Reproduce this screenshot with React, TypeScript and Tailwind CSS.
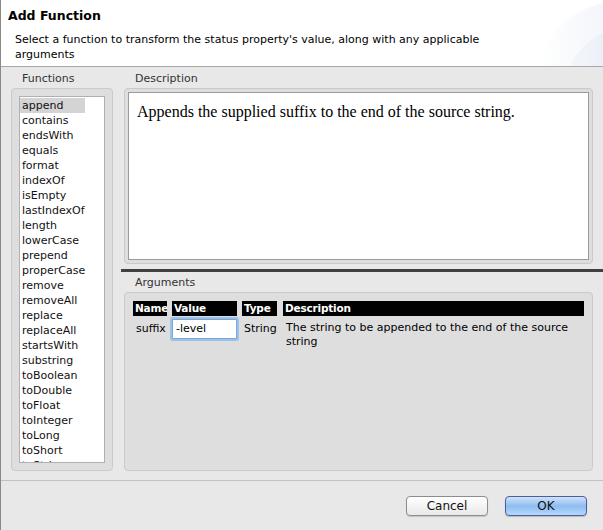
const FUNCTIONS = [
  "append",
  "contains",
  "endsWith",
  "equals",
  "format",
  "indexOf",
  "isEmpty",
  "lastIndexOf",
  "length",
  "lowerCase",
  "prepend",
  "properCase",
  "remove",
  "removeAll",
  "replace",
  "replaceAll",
  "startsWith",
  "substring",
  "toBoolean",
  "toDouble",
  "toFloat",
  "toInteger",
  "toLong",
  "toShort",
  "toString",
];

const HeaderArt = () => (
  <svg
    className="absolute right-0 top-0"
    width="70"
    height="66"
    viewBox="0 0 70 66"
  >
    <defs>
      <linearGradient id="g1" x1="0" y1="0" x2="1" y2="0">
        <stop offset="0" stopColor="#ffffff" />
        <stop offset="1" stopColor="#dfe6f3" />
      </linearGradient>
      <linearGradient id="g2" x1="0" y1="0" x2="1" y2="0">
        <stop offset="0" stopColor="#f4f7fc" />
        <stop offset="1" stopColor="#d3ddef" />
      </linearGradient>
    </defs>
    <ellipse cx="95" cy="75" rx="90" ry="75" fill="url(#g1)" />
    <ellipse cx="105" cy="95" rx="75" ry="70" fill="url(#g2)" />
  </svg>
);

const GroupLabel = ({ children }: { children: string }) => (
  <div className="pl-[11px] h-[18px] text-[11px] leading-[18px] text-[#333] shrink-0">
    {children}
  </div>
);

const ColHead = ({ children }: { children: string }) => (
  <div className="bg-black text-white font-bold pl-[2px] text-[10.5px] tracking-[-0.2px] whitespace-nowrap overflow-hidden">
    {children}
  </div>
);

export default function App() {
  return (
    <div
      className="w-[603px] h-[530px] bg-[#e8e8e8] flex flex-col overflow-hidden border-l border-[#8a8a8a] text-black"
      style={{ fontFamily: '"DejaVu Sans", "Lucida Grande", sans-serif' }}
    >
      <div className="relative h-[67px] bg-white border-b border-[#a8a8a8] shrink-0 overflow-hidden">
        <HeaderArt />
        <div className="relative pl-[7px] pt-[8px] text-[12.5px] font-bold leading-[16px]">
          Add Function
        </div>
        <div className="relative ml-[14px] mt-[8px] w-[480px] text-[11px] leading-[15px]">
          Select a function to transform the status property's value, along
          with any applicable arguments
        </div>
      </div>

      <div className="flex flex-1 min-h-0 pt-[3px] pb-[9px]">
        <div className="w-[112px] pl-[10px] flex flex-col shrink-0 min-h-0">
          <GroupLabel>Functions</GroupLabel>
          <div className="flex-1 min-h-0 rounded-[4px] border border-[#cacaca] bg-[#dedede] p-[7px]">
            <div className="h-full bg-white border border-[#b0b0b0] overflow-hidden pt-[1px]">
              {FUNCTIONS.map((f, i) => (
                <div
                  key={f}
                  className={`pl-[2px] h-[15px] text-[11px] leading-[15px] text-[#111] ${
                    i === 0 ? "bg-[#d4d4d4] w-[65px]" : ""
                  }`}
                >
                  {f}
                </div>
              ))}
            </div>
          </div>
        </div>

        <div className="flex-1 flex flex-col pl-[8px] min-h-0">
          <div className="flex flex-col h-[194px] pl-[3px] pr-[10px] shrink-0">
            <GroupLabel>Description</GroupLabel>
            <div className="flex-1 rounded-[4px] border border-[#cacaca] bg-[#dedede] p-[3px]">
              <div
                className="h-full bg-white border border-[#9a9a9a] pl-[8px] pt-[9px] text-[16px] leading-[20px]"
                style={{ fontFamily: '"Liberation Serif", "Times New Roman", serif' }}
              >
                Appends the supplied suffix to the end of the source string.
              </div>
            </div>
          </div>

          <div className="mt-[5px] h-[3px] bg-[#404040] shrink-0" />

          <div className="flex-1 min-h-0 flex flex-col pl-[3px] pr-[10px] pt-[2px]">
            <GroupLabel>Arguments</GroupLabel>
            <div className="flex-1 rounded-[4px] border border-[#cacaca] bg-[#dedede] pl-[8px] pr-[8px] pt-[8px]">
              <div className="flex text-[11px] leading-[15px]">
                <div className="w-[39px] shrink-0 pr-[5px]">
                  <ColHead>Name</ColHead>
                  <div className="pl-[3px] pt-[5px]">suffix</div>
                </div>
                <div className="w-[70px] shrink-0 pr-[5px]">
                  <ColHead>Value</ColHead>
                  <div className="pt-[3px]">
                    <div className="h-[20px] bg-white border border-[#7aa7d8] shadow-[0_0_0_2px_#9cc2ea] rounded-[1px] pl-[3px] leading-[18px] text-[11px]">
                      -level
                    </div>
                  </div>
                </div>
                <div className="w-[41px] shrink-0 pr-[6px]">
                  <ColHead>Type</ColHead>
                  <div className="pl-[2px] pt-[5px]">String</div>
                </div>
                <div className="flex-1">
                  <ColHead>Description</ColHead>
                  <div className="pl-[3px] pt-[5px] leading-[14px]">
                    The string to be appended to the end of the source string
                  </div>
                </div>
              </div>
            </div>
          </div>
        </div>
      </div>

      <div className="h-[50px] border-t border-[#c2c2c2] shrink-0 flex items-start justify-end gap-[17px] pt-[15px] pr-[16px]">
        <button className="w-[82px] h-[20px] rounded-[4px] border border-[#8d8d8d] bg-gradient-to-b from-white to-[#e9e9e9] text-[12px] leading-[18px] text-[#111] shadow-[0_1px_1px_rgba(0,0,0,0.15)]">
          Cancel
        </button>
        <button className="w-[82px] h-[20px] rounded-[4px] border border-[#4b5e9b] bg-gradient-to-b from-[#cfe3fa] via-[#8ebcef] to-[#b5d8fb] text-[12px] leading-[18px] text-[#111] shadow-[0_1px_1px_rgba(0,0,0,0.2)]">
          OK
        </button>
      </div>
    </div>
  );
}
